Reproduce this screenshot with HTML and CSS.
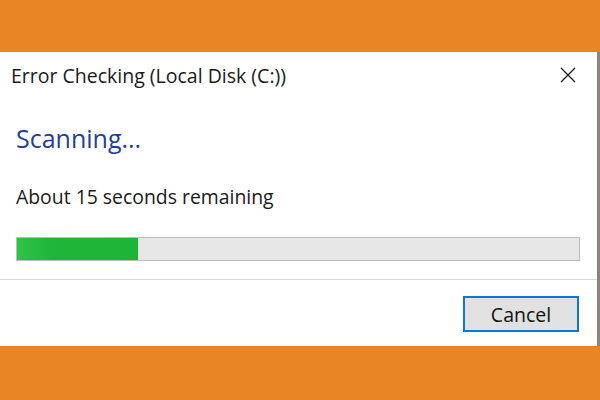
FILE: index.html
```html
<!DOCTYPE html>
<html>
<head>
<meta charset="utf-8">
<link rel="stylesheet" href="styles.css">
</head>
<body>
<div class="band-top"></div>
<div class="dialog">
  <div class="titlebar">
    <span class="title">Error Checking (Local Disk (C:))</span>
    <svg class="close" width="16" height="16" viewBox="0 0 16 16"><path d="M1 1 L15 15 M15 1 L1 15" stroke="#1a1a1a" stroke-width="1.3" fill="none"/></svg>
  </div>
  <div class="content">
    <div class="heading">Scanning...</div>
    <div class="status">About 15 seconds remaining</div>
    <div class="progress"><div class="fill" style="width:21.6%"></div></div>
  </div>
  <div class="footer">
    <button class="btn">Cancel</button>
  </div>
</div>
</body>
</html>
```
FILE: styles.css
```css
html, body {
  margin: 0;
  padding: 0;
  background: #e98524;
  font-family: "Open Sans", "Noto Sans", sans-serif;
}
.band-top {
  height: 52px;
}
.dialog {
  background: #ffffff;
  height: 294px;
  border-right: 3px solid #8d8480;
  display: flex;
  flex-direction: column;
}
.titlebar {
  height: 46px;
  display: flex;
  align-items: center;
  justify-content: space-between;
  padding: 0 21px 0 11px;
}
.title {
  font-size: 19.5px;
  color: #1a1a1a;
}
.close {
  display: block;
}
.content {
  padding: 25px 17px 18px 16px;
  border-bottom: 1px solid #dcdcdc;
}
.heading {
  color: #1f3f98;
  font-size: 25px;
  line-height: 30px;
}
.status {
  margin-top: 32px;
  font-size: 19.4px;
  color: #1a1a1a;
  line-height: 24px;
}
.progress {
  margin-top: 28px;
  height: 22px;
  background: #e6e6e6;
  border: 1px solid #bcbcbc;
}
.fill {
  height: 100%;
  background: linear-gradient(90deg, #2fc24a 0%, #1fb53a 30%, #1db538 100%);
}
.footer {
  flex: 1;
  display: flex;
  align-items: center;
  justify-content: flex-end;
  padding: 2px 18px 0 0;
}
.btn {
  width: 116px;
  height: 36px;
  background: #e1e1e1;
  border: 2px solid #0a78d4;
  font-family: inherit;
  font-size: 19.5px;
  color: #111;
  padding: 0;
}
```
